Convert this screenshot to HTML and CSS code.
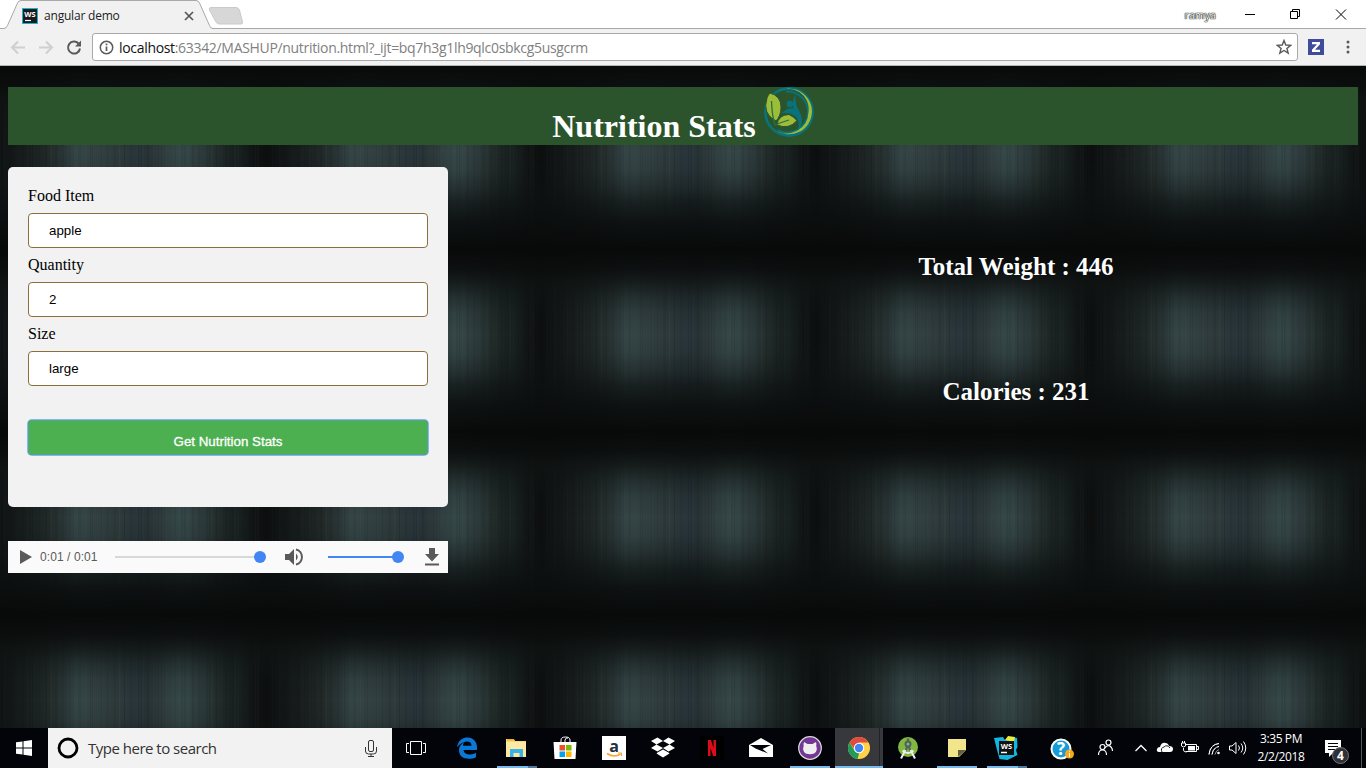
FILE: index.html
```html
<!DOCTYPE html>
<html lang="en">
<head>
<meta charset="utf-8">
<title>angular demo</title>
<link rel="stylesheet" href="styles.css">
</head>
<body>
<header class="tabstrip">
  <svg class="tab-shape" width="250" height="29" viewBox="0 0 250 29"><path d="M0 29V28.500H4Q6.500 28 7.500 25.500L17.500 3Q18.500.5 21 .5H196Q198.500.5 199.500 3L209.500 25.500Q210.500 28.500 213 28.500V29z" fill="#f1f1f1"/><path d="M0 28.500H4Q6.500 28 7.500 25.500L17.500 3Q18.500.5 21 .5H196Q198.500.5 199.500 3L209.500 25.500Q210.500 28.500 213 28.500" fill="none" stroke="#a9a9a9"/><path d="M211 7.500H236Q238.500 7.500 239.500 10L242.500 22Q243 24 241 24H219Q217 24 216 22L209.500 10Q208.500 7.500 211 7.500z" fill="#d7d7d7" stroke="#cacaca"/></svg>
  <div class="tab">
    <svg width="16" height="16" viewBox="0 0 16 16"><rect width="16" height="16" fill="#12b5dc"/><rect x="1" y="1" width="14" height="14" fill="#1a1a1a"/><text x="8" y="8.500" text-anchor="middle" class="ws">WS</text><path d="M3 12.500h6" stroke="#fff" stroke-width="1.200"/></svg>
    <span class="tab-title">angular demo</span>
    <svg class="tab-close" width="10" height="10" viewBox="0 0 10 10"><path d="M1 1l8 8M9 1L1 9" stroke="#555" stroke-width="1.700"/></svg>
  </div>
  <div class="window-controls">
    <span class="user">ramya</span>
    <svg width="145" height="28" viewBox="0 0 145 28" fill="none" stroke="#000"><path d="M24 13.500h10M69.500 10.500h7v7h-7zM71.500 10V8.500h7v7H77M115 8.500l10 10M125 8.500l-10 10"/></svg>
  </div>
</header>
<nav class="toolbar">
  <svg class="nav-icons" width="84" height="36" viewBox="0 0 84 36" fill="none" stroke="#cfcfcf" stroke-width="2"><path d="M25 18.500H12M18 12.500l-6 6 6 6M39 18.500h13M46 12.500l6 6-6 6"/><path d="M78.500 14.500A6 6 0 1 0 80 19.500" stroke="#5a5a5a"/><path d="M81 11.500v6h-6z" fill="#5a5a5a" stroke="none"/></svg>
  <div class="address">
    <svg width="15" height="15" viewBox="0 0 15 15" fill="none" stroke="#5a5a5a"><circle cx="7.500" cy="7.500" r="6.200" stroke-width="1.500"/><path d="M7.500 6.500v4.500M7.500 3.500v1.800" stroke-width="1.700"/></svg>
    <span class="url"><b>localhost</b>:63342/MASHUP/nutrition.html?_ijt=bq7h3g1lh9qlc0sbkcg5usgcrm</span>
    <svg class="star" width="16" height="16" viewBox="0 0 16 16"><path d="M8 1.500l1.800 4.500 4.900.3-3.800 3.100 1.300 4.700L8 11.500l-4.200 2.600 1.300-4.700L1.300 6.300l4.900-.3z" fill="none" stroke="#5a5a5a" stroke-width="1.400"/></svg>
  </div>
  <svg class="extension" width="16" height="16" viewBox="0 0 16 16"><rect width="16" height="16" fill="#3f4c9c"/><path d="M4 3h8v2.300L7 10.700h5V13H4v-2.300l5-5.400H4z" fill="#fff"/></svg>
  <svg class="kebab" width="4" height="16" viewBox="0 0 4 16" fill="#5a5a5a"><circle cx="2" cy="3" r="1.500"/><circle cx="2" cy="8" r="1.500"/><circle cx="2" cy="13" r="1.500"/></svg>
</nav>
<main class="page">
  <h1 class="banner">Nutrition Stats <svg width="50" height="50" viewBox="0 0 50 50"><circle cx="25" cy="25" r="23.600" fill="none" stroke="#08737c" stroke-width="2.600"/><path d="M22 4.500A20.500 20.500 0 0 1 25 45.500Q19 46 14 43" fill="none" stroke="#08737c" stroke-width="2"/><path d="M14 4.500A23 23 0 0 1 48 25A23 23 0 0 1 11 42.500A21.500 21.500 0 0 0 44.500 25A20.500 20.500 0 0 0 14 4.500z" fill="#9cbd3a"/><path d="M31.500 7Q31 15 33.500 21Q38 28 38 34Q37.500 40 33.500 44Q37 33 31 29Q24 24 17 26.500Q24 20.500 29.500 21.500Q27.500 15 31.500 7z" fill="#08737c"/><circle cx="25.800" cy="17" r="3.200" fill="#08737c"/><path d="M6 6Q17 9 17 20Q17 29 12 34Q-2 27 3 11Q4 8 6 6z" fill="#9cbd3a" stroke="#2b542c"/><path d="M13 38Q14 28 25 27.500Q30 30 33 33.500Q25 43 13 38z" fill="#9cbd3a" stroke="#2b542c"/><path d="M7.500 14Q8 29 11 38Q18 35 25 33" fill="none" stroke="#2b7042" stroke-width="1.300"/></svg></h1>
  <div class="columns">
    <section class="left">
      <form class="card">
        <label for="food">Food Item</label>
        <input id="food" type="text" value="apple">
        <label for="qty">Quantity</label>
        <input id="qty" type="text" value="2">
        <label for="size">Size</label>
        <input id="size" type="text" value="large">
        <button type="button">Get Nutrition Stats</button>
      </form>
      <div class="player">
        <svg width="12" height="14" viewBox="0 0 12 14"><path d="M0 0l12 7-12 7z" fill="#5a5a5a"/></svg>
        <span class="time">0:01 / 0:01</span>
        <div class="track"><i></i></div>
        <svg class="speaker" width="19" height="18" viewBox="0 0 19 18"><path d="M0 6h4l5-5v16l-5-5H0zM11 5.500q3.500 3.500 0 7z" fill="#5a5a5a"/><path d="M11 1.500a7.700 7.700 0 0 1 0 15" fill="none" stroke="#5a5a5a" stroke-width="2"/></svg>
        <div class="track volume"><i></i></div>
        <svg class="download" width="14" height="18" viewBox="0 0 14 18" fill="#5a5a5a"><path d="M4 0h6v6h4l-7 7.500L0 6h4zM0 15.500h14v2H0z"/></svg>
      </div>
    </section>
    <section class="results">
      <h2>Total Weight : 446</h2>
      <h2>Calories : 231</h2>
    </section>
  </div>
</main>
<footer class="taskbar">
  <div class="start"><svg width="16" height="16" viewBox="0 0 16 16" fill="#fff"><path d="M0 2.300L6.500 1.400V7.500H0zM7.500 1.200L16 0V7.500H7.500zM0 8.500H6.500V14.600L0 13.700zM7.500 8.500H16V16L7.500 14.800z"/></svg></div>
  <div class="search">
    <svg width="22" height="22" viewBox="0 0 22 22"><circle cx="11" cy="11" r="9" fill="none" stroke="#000" stroke-width="2.800"/></svg>
    <span>Type here to search</span>
    <svg class="mic" width="12" height="17" viewBox="0 0 12 17" fill="none" stroke="#333"><rect x="3.500" y=".5" width="5" height="11" rx="1.500"/><path d="M.5 7v4q0 3 3 3h5q3 0 3-3V7M6 14v2.500M3 16.500h6"/></svg>
  </div>
  <div class="start"><svg width="20" height="16" viewBox="0 0 20 16" fill="none" stroke="#fff"><path d="M4.500 1.500h11v13h-11zM3 3.500H.5v9H3M17 3.500h2.500v9H17"/></svg></div>
  <div class="apps">
    <div class="app"><svg width="24" height="24" viewBox="0 0 24 24"><path d="M2 11.500C3 4 8 1.500 12.500 1.500c6 0 9.500 4.500 9.500 10V14H8.500c.3 3 3 4.500 6.500 4.500 2.300 0 4.300-.7 6-1.700v4.500c-2 1-4.300 1.500-7 1.500-6.500 0-10-3.500-10-8.500 0-4 2.500-6.500 5.500-8C8 7.500 8 9 8 9.800h8.500C16.500 7 15 5.500 12 5.500c-4 0-7.500 2.500-10 6z" fill="#0a78d7"/></svg></div>
    <div class="app open split"><svg width="24" height="24" viewBox="0 0 24 24"><path d="M2 3h8l1 2h11v16H2z" fill="#f8d775"/><path d="M2 6h20v15H2z" fill="#ffe9a2"/><path d="M3 3h7v1.500H3z" fill="#eab130"/><path d="M6 21v-8h13v8h-3.500v-4h-6v4z" fill="#39b4e8"/></svg></div>
    <div class="app"><svg width="24" height="24" viewBox="0 0 24 24"><path d="M8 7V4q0-3 4.500-3T17 4v3M12 7V4q1-3 3-2" fill="none" stroke="#fff"/><path d="M.5 6h23l-1 17h-21z" fill="#fff"/><path d="M6.500 9h5.500v5.500H6.500z" fill="#ef5023"/><path d="M13 9h5.500v5.500H13z" fill="#7db900"/><path d="M6.500 15.500h5.500V21H6.500z" fill="#00a3ee"/><path d="M13 15.500h5.500V21H13z" fill="#ffb800"/></svg></div>
    <div class="app"><svg class="loose" width="24" height="24" viewBox="0 0 24 24"><path d="M0 0h24v24H0z" fill="#fff"/><text x="12" y="15.500" text-anchor="middle" class="amazon">a</text><path d="M5 17.500q7 4.500 13.500.7" fill="none" stroke="#f9a12b" stroke-width="1.500"/><path d="M16 17h3.500v3" fill="none" stroke="#f9a12b"/></svg></div>
    <div class="app"><svg width="24" height="24" viewBox="0 0 24 24" fill="#fff"><path d="M0 5L6.500 1.500 12 5 5.500 8.500zM12 5l5.500-3.500L24 5l-5.500 3.500zM0 12l5.500-3.500L12 12l-5.500 3.500zM12 12l6.500-3.500L24 12l-6.500 3.500zM5.500 17.500l1-1L12 13.500l5.500 3 1 1L12 21.500z"/></svg></div>
    <div class="app"><svg width="24" height="24" viewBox="0 0 24 24"><path d="M0 0h24v24H0z" fill="#000"/><path d="M8 4h3l2.500 8V4H16v16h-2.800L10.500 12v8H8z" fill="#dc0d19"/></svg></div>
    <div class="app"><svg width="24" height="24" viewBox="0 0 24 24"><path d="M0 9l12-7 12 7v12H0z" fill="#fff"/><path d="M1 9h21l-8.500 4 5.500 4.500L6.500 12.500z" fill="#02030a"/></svg></div>
    <div class="app open"><svg width="26" height="26" viewBox="0 0 26 26"><circle cx="13" cy="13" r="11.300" fill="#753795" stroke="#ddd" stroke-width="1.200"/><path d="M7 7l3.500 2h5L19 7q.7 2 .2 4 2 5-2 7.500-4 1.500-8.500 0-4-2.500-2-7.500Q6.200 9 7 7z" fill="#eee"/></svg></div>
    <div class="app open active"><svg width="22" height="22" viewBox="0 0 22 22"><circle cx="11" cy="11" r="11" fill="#ffd248"/><path d="M1.500 5.500A11 11 0 0 1 20.500 5.500H11L7 13z" fill="#e14a3f"/><path d="M1.500 5.500L6.500 13.500 11 16.500 9.500 22A11 11 0 0 1 1.500 5.500z" fill="#229b5a"/><circle cx="11" cy="11" r="5.200" fill="#fff"/><circle cx="11" cy="11" r="4.200" fill="#4285f4"/></svg></div>
    <div class="app"><svg width="24" height="24" viewBox="0 0 24 24"><circle cx="12" cy="11" r="10" fill="#82b740"/><circle cx="12" cy="8" r="2.500" fill="#8ea899" stroke="#4b6656" stroke-width="2"/><path d="M12 5V2.500M11 11l-2 6M13 11l2 6" stroke="#4b6656" stroke-width="2.200"/><path d="M9.500 14L5 22.500M14.500 14l4.500 8.500M6.500 14.500q5.500 5 11 0" fill="none" stroke="#eee" stroke-width="2"/></svg></div>
    <div class="app open"><svg width="18" height="18" viewBox="0 0 18 18"><path d="M0 0h18v11l-7 7H0z" fill="#f3e58c"/><path d="M10 18v-7h8z" fill="#655f3b"/></svg></div>
    <div class="app open split"><svg width="24" height="24" viewBox="0 0 24 24"><path d="M0 2l9-1 2 3 7-3 5 1 .5 9-1.500 3 1.500 5-10 5-8-1L3 14z" fill="#13b6de"/><path d="M11 4l3-4 7 1-1 5z" fill="#e8ee3e"/><path d="M5 5h15v14H5z" fill="#111"/><text x="12.500" y="12.500" text-anchor="middle" class="ws">WS</text><path d="M7 16.500h6" stroke="#fff" stroke-width="1.500"/></svg></div>
  </div>
  <svg class="tray" width="224" height="40" viewBox="0 0 224 40" fill="none" stroke="#fff"><circle cx="31" cy="21" r="9.500" fill="#159cd8" stroke-width="2"/><text x="31" y="27" text-anchor="middle" class="help">?</text><circle cx="39.500" cy="26" r="4.500" fill="#f5a81c" stroke="none"/><path d="M39.500 25v4M39.500 22.800v1"/><circle cx="72.500" cy="19" r="2.500" stroke-width="1.200"/><circle cx="78.500" cy="14.500" r="2.500" stroke-width="1.200"/><path d="M68.500 27q0-5 4-5t4 5M75 20q3-4 6-1 1.500 1.500 1.500 4" stroke-width="1.200"/><path d="M105.500 23l5.500-5.500 5.500 5.500" stroke-width="1.300"/><path d="M129 24q-3-.5-2-3 .5-2 3-2 1.500-5 5.500-4 2.500 0 3.500 3 4 0 4 3 0 3-3 3z" fill="#fff" stroke="none"/><path d="M132 24q-2-4 2-5 3-3 6 1" stroke="#222"/><path d="M156 16.500h10.500v7H156M166.500 18.500h2v3h-2M153.500 20v2q0 2 3 2"/><path d="M158 18h7v4.500h-7z" fill="#fff" stroke="none"/><path d="M151.500 15h4v3q-2 2-4 0zM152.500 13v2M154.500 13v2"/><path d="M179 26.500Q180 16.500 189 15.500M182 26.500q1-7 7-8M185 26.500q1-4 4-5" stroke="#999"/><path d="M179 26.500Q180 16.500 189 15.500M182 26.500q1-7 7-8" stroke-dasharray="8 1"/><circle cx="188.500" cy="25" r="1.300" fill="#fff" stroke="none"/><path d="M199.500 18h2.500l4-3.500v11l-4-3.500h-2.500zM208.500 17.500q2 2.500 0 5M211 15.500q3.500 4.500 0 9M213.500 13.500q4.500 6.500 0 13"/></svg>
  <div class="clock"><span>3:35 PM</span><span>2/2/2018</span></div>
  <svg class="action" width="28" height="30" viewBox="0 0 28 30"><path d="M0 5h16v13H8l-4 4v-4H0z" fill="#fff"/><path d="M3 8.500h10M3 11.500h10M3 14.500h7" stroke="#02030a"/><circle cx="15.500" cy="20.500" r="8" fill="#303136" stroke="#777"/><text x="15.500" y="25" text-anchor="middle" class="count">4</text></svg>
  <i class="peek"></i>
</footer>
</body>
</html>
```
FILE: styles.css
```css
* { box-sizing: border-box; }
body { margin: 0; width: 1366px; height: 768px; overflow: hidden; display: flex; flex-direction: column; font-family: "Liberation Serif", "Times New Roman", serif; }
svg { flex: none; }
.tabstrip { position: relative; height: 29px; background: linear-gradient(#a9a9a9, #a9a9a9) 0 100% / 100% 1px no-repeat #fff; display: flex; justify-content: space-between; font: 12px "Open Sans", sans-serif; }
.tab-shape { position: absolute; left: 0; top: 0; }
.tab { position: relative; display: flex; align-items: center; width: 194px; padding: 2px 0 0 22px; }
.tab-title { margin-left: 6px; color: #222; letter-spacing: -.2px; }
.tab-close { margin-left: auto; }
.ws { font: bold 7.5px "Open Sans", sans-serif; fill: #fff; stroke: none; }
.window-controls { display: flex; align-items: center; }
.user { font-size: 10.5px; color: #fff; letter-spacing: .1px; text-shadow: 0 0 1px #000, 0 0 1px #000, 0 0 1px #000; margin-right: 5px; }
.toolbar { height: 37px; background: #f1f1f1; border-bottom: 1px solid #b5b5b5; display: flex; align-items: center; }
.nav-icons { margin-right: 8px; }
.address { width: 1206px; height: 28px; border: 1px solid #a9a9a9; border-radius: 3px; background: #fff; display: flex; align-items: center; padding: 0 5px 0 6px; }
.url { font: 14px "Open Sans", sans-serif; color: #808080; margin-left: 5px; letter-spacing: -.32px; white-space: nowrap; }
.url b { font-weight: 400; color: #111; }
.star { margin-left: auto; }
.extension { margin-left: 10px; }
.kebab { margin-left: 22px; }
.page {
  height: 662px; padding: 0 8px; display: flow-root;
  background-color: #0b0d0d;
  background-size: 275px 183px, 275px 183px, 275px 183px, 275px 183px;
  background-image:
    linear-gradient(rgba(8,10,9,1) 0, rgba(11,13,13,.94) 20px, rgba(14,18,17,.8) 33px, rgba(14,20,19,.45) 48px, rgba(14,20,19,.15) 64px, rgba(14,20,19,0) 85px, rgba(14,20,19,.1) 104px, rgba(14,18,17,.4) 122px, rgba(12,16,16,.7) 137px, rgba(11,14,14,.92) 156px, rgba(8,10,9,1) 183px),
    repeating-linear-gradient(90deg, rgba(170,200,200,.02) 0 1px, transparent 1px 5px, rgba(0,0,0,.08) 5px 6px, transparent 6px 11px, rgba(0,0,0,.05) 11px 13px, transparent 13px 17px),
    repeating-linear-gradient(90deg, rgba(0,0,0,.08) 0 1px, transparent 1px 4px, rgba(150,190,190,.02) 4px 6px, transparent 6px 9px, rgba(0,0,0,.06) 9px 10px, transparent 10px 23px),
    linear-gradient(90deg, #0f1212 0, #151a1a 18px, #1b2221 35px, #242d2c 52px, #2b3738 65px, #354647 77px, #334142 95px, #2e3a3b 118px, #28343a 140px, #293437 150px, #303d3e 163px, #364849 180px, #303e40 197px, #263130 213px, #1c2524 226px, #182020 240px, #121515 252px, #0d0f0f 266px, #0f1212 275px);
}
.banner { margin: 21px 0 22px; height: 58px; background: #2b542c; color: #fff; font-size: 32px; font-weight: 700; text-align: center; line-height: 37px; }
.banner svg { vertical-align: baseline; }
.columns { display: flex; }
.left { width: 440px; }
.card { height: 340px; border-radius: 5px; background: #f2f2f2; padding: 20px; display: flex; flex-direction: column; }
.card label { font-size: 16px; line-height: 18px; color: #000; }
.card input { height: 35px; margin: 8px 0; border: 1px solid #8b6f3a; border-radius: 4px; padding: 0 20px; background: #fff; font: 13.333px "Liberation Sans", Arial, sans-serif; color: #000; }
.card button { height: 35px; margin-top: 26px; padding: 8px 0 0; border: 0; border-radius: 4px; background: #4caf50; color: #fff; box-shadow: inset 0 0 0 1px #4fa791, 0 0 0 1px #8ab4f0; font: 13.333px "Liberation Sans", Arial, sans-serif; -webkit-text-stroke: .3px #fff; }
.player { height: 32px; margin-top: 34px; background: #fafafa; display: flex; align-items: center; padding: 0 9px 0 12px; }
.time { margin-left: 8px; width: 75px; font: 12px "Liberation Sans", Arial, sans-serif; letter-spacing: .08px; color: #5a5a5a; }
.track { position: relative; width: 150px; height: 2px; background: #d8d8d8; }
.track i { position: absolute; right: -1px; top: -5px; width: 12px; height: 12px; border-radius: 50%; background: #4285f4; }
.speaker { margin-left: 20px; }
.volume { margin-left: 24px; width: 75px; background: #4285f4; }
.download { margin-left: auto; }
.results { flex: 1; padding: 86px 0 0 226px; text-align: center; color: #fff; }
.results h2 { margin: 0 0 97px; font-size: 25px; line-height: 28px; }
.taskbar { height: 40px; background: #02040a; display: flex; color: #fff; }
.start { width: 48px; display: flex; align-items: center; justify-content: center; }
.search { width: 344px; background: #f2f2f2; display: flex; align-items: center; padding: 0 15px 0 9px; color: #333; font: 15px "Open Sans", sans-serif; letter-spacing: -.5px; }
.search span { margin-left: 9px; white-space: nowrap; }
.mic { margin-left: auto; }
.apps { display: flex; width: 590px; margin-left: 2px; }
.app { position: relative; flex: none; width: 49px; display: flex; align-items: center; justify-content: center; }
.loose { overflow: visible; }
.open::after { content: ""; position: absolute; left: 5px; bottom: 0; width: 40px; height: 2px; background: #76b9ed; }
.split::after { left: 6px; background: linear-gradient(90deg, #76b9ed 31px, #4d7ba0 31px); }
.active { background: linear-gradient(90deg, #36383b 44px, #222427 44px 45px, #36383b 45px) 1px 0 / 48px 100% no-repeat; }
.active::after { left: 1px; width: 48px; }
.amazon { font: bold 16px/1 "Open Sans", sans-serif; fill: #232f3e; }
.tray { margin-left: -2px; }
.help { font: bold 17px "Open Sans", sans-serif; fill: #fff; stroke: none; }
.clock { width: 54px; display: flex; flex-direction: column; align-items: center; justify-content: center; font: 12px/18px "Open Sans", sans-serif; letter-spacing: -.4px; white-space: nowrap; }
.action { margin: 7px 0 0 17px; }
.count { font: bold 12px "Open Sans", sans-serif; fill: #fff; }
.peek { margin-left: 8px; width: 1px; background: #555; }
```
